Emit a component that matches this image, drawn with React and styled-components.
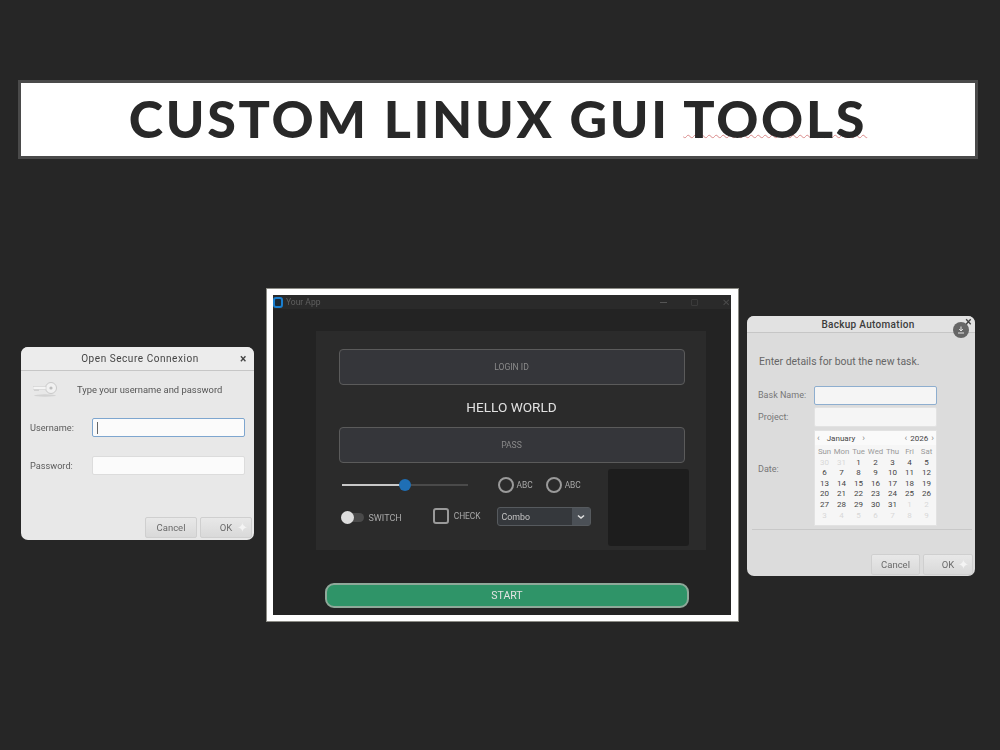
import React from "react";
import styled, { createGlobalStyle } from "styled-components";

const GlobalStyle = createGlobalStyle`
  html, body { margin: 0; padding: 0; background: #262626; }
  * { box-sizing: border-box; }
`;

const Page = styled.div`
  width: 1000px;
  height: 750px;
  overflow: hidden;
  background: #262626;
  padding-top: 80px;
  font-family: Roboto, sans-serif;
`;

const Banner = styled.div`
  width: 960px;
  height: 79px;
  margin-left: 18px;
  background: #fff;
  border: 3px solid #4a4a4a;
  display: flex;
  align-items: center;
  justify-content: center;
  padding: 0 0 4px 0;
  filter: blur(0.4px);
`;

const Title = styled.h1`
  margin: 0;
  font-family: Lato, sans-serif;
  font-weight: 900;
  font-size: 52px;
  line-height: 1;
  letter-spacing: 2.7px;
  color: #282828;
  white-space: nowrap;
`;

const Misspelt = styled.span`
  text-decoration: underline wavy #d98a8a 1px;
  text-underline-offset: -4px;
  text-decoration-skip-ink: none;
`;

const Windows = styled.div`
  display: flex;
  align-items: flex-start;
  margin-top: 129px;
  padding-left: 21px;
`;

const GnomeDialog = styled.div`
  width: ${(p) => p.$width}px;
  height: ${(p) => p.$height}px;
  margin-top: ${(p) => p.$top}px;
  margin-left: ${(p) => p.$left || 0}px;
  background: ${(p) => p.$bg};
  border-radius: 7px;
  display: flex;
  flex-direction: column;
  color: #555;
  filter: blur(0.5px);
`;

const DialogBar = styled.div`
  height: ${(p) => p.$height}px;
  flex: none;
  display: flex;
  align-items: center;
  justify-content: center;
  position: relative;
  padding-left: ${(p) => p.$pad || 0}px;
  border-bottom: 1px solid #c6c6c6;
  background: ${(p) => p.$bg};
  border-radius: 7px 7px 0 0;
  color: ${(p) => p.$color};
  font-size: ${(p) => p.$size}px;
  font-weight: ${(p) => p.$weight};
  letter-spacing: ${(p) => p.$spacing}px;
`;

const CloseMark = styled.span`
  position: absolute;
  right: ${(p) => p.$right}px;
  top: ${(p) => p.$top}px;
  font-size: 12px;
  line-height: 1;
  font-weight: 700;
  color: #444;
`;

const Intro = styled.div`
  display: flex;
  align-items: center;
  height: 20px;
  margin: 8px 0 0 12px;
  gap: 19px;
  font-size: 9.4px;
  color: #555;
`;

const FormRow = styled.div`
  display: flex;
  align-items: center;
  justify-content: space-between;
  margin: ${(p) => p.$top}px 9px 0 9px;
  font-size: 9.2px;
  color: #5c5c5c;
`;

const Field = styled.div`
  width: 153px;
  height: 19px;
  background: #fbfbfb;
  border: 1px solid ${(p) => (p.$focus ? "#7ea6cf" : "#dcdcdc")};
  border-radius: 2px;
  padding: 3px 4px;
`;

const Caret = styled.div`
  width: 1px;
  height: 12px;
  background: #666;
`;

const ButtonRow = styled.div`
  margin-top: auto;
  display: flex;
  justify-content: flex-end;
  gap: ${(p) => p.$gap}px;
  padding: 0 2px ${(p) => p.$bottom}px 0;
`;

const DialogButton = styled.div`
  width: ${(p) => p.$width}px;
  height: 21px;
  background: linear-gradient(#e8e8e8, #d9d9d9);
  border: 1px solid #cfcfcf;
  border-radius: 2px;
  position: relative;
  display: flex;
  align-items: center;
  justify-content: center;
  font-size: 9.5px;
  color: #6a6a6a;
`;

const Sparkle = styled.span`
  position: absolute;
  right: 3px;
  top: 3px;
  font-size: 13px;
  line-height: 1;
  color: #f4f4f4;
`;

/* center window */
const AppFrame = styled.div`
  width: 473px;
  height: 334px;
  margin-left: 12px;
  border: solid #fff;
  border-width: 7px 8px 7px 7px;
  outline: 1px solid #8b8b85;
  outline-offset: -1px;
  background: #232323;
  display: flex;
  flex-direction: column;
  align-items: center;
  font-family: Roboto, sans-serif;
  filter: blur(0.5px);
`;

const AppBar = styled.div`
  width: 100%;
  height: 14px;
  flex: none;
  background: #2a2a2a;
  display: flex;
  align-items: center;
  font-size: 8.5px;
  color: #5f5f5f;
`;

const AppIcon = styled.div`
  width: 10px;
  height: 11px;
  margin-right: 3px;
  background: #1b2a36;
  border: 2.5px solid #1a7fd0;
  border-radius: 3px;
`;

const WindowControls = styled.div`
  margin-left: auto;
  display: flex;
  align-items: center;
  gap: 24px;
  padding-right: 1px;
  font-size: 10px;
  color: #4b4b4b;
`;

const MinimizeMark = styled.div`
  width: 7px;
  height: 1px;
  background: #555;
`;

const MaximizeMark = styled.div`
  width: 7px;
  height: 7px;
  border: 1px solid #3b3b3b;
  border-radius: 1px;
`;

const Panel = styled.div`
  width: 390px;
  height: 219px;
  margin-top: 22px;
  margin-left: 17px;
  flex: none;
  background: #2b2b2b;
  padding: 18px 21px 0 23px;
  display: flex;
  flex-direction: column;
  align-items: center;
`;

const TextBox = styled.div`
  width: 346px;
  height: 36px;
  flex: none;
  background: #35363a;
  border: 1.5px solid #5b5b5b;
  border-radius: 4px;
  display: flex;
  align-items: center;
  justify-content: center;
  font-size: 8.6px;
  color: #8a8a8a;
`;

const Hello = styled.div`
  height: 42px;
  flex: none;
  display: flex;
  align-items: center;
  padding-top: 2px;
  font-size: 13.6px;
  color: #e2e2e2;
`;

const Controls = styled.div`
  width: 100%;
  flex: none;
  display: grid;
  grid-template-columns: 158px 111px 81px;
  margin-top: 6px;
`;

const ControlColumn = styled.div`
  display: flex;
  flex-direction: column;
  padding-top: ${(p) => p.$pad}px;
`;

const TrackRow = styled.div`
  height: 2px;
  width: 126px;
  margin-left: 3px;
  position: relative;
  background: #4a4a4a;
`;

const TrackFill = styled.div`
  height: 100%;
  background: #c8c8c8;
`;

const Thumb = styled.div`
  position: absolute;
  top: -5px;
  width: 12px;
  height: 12px;
  margin-left: -6px;
  border-radius: 50%;
  background: #1f6fb5;
`;

const ToggleLine = styled.div`
  display: flex;
  align-items: center;
  margin-top: 25px;
`;

const Toggle = styled.div`
  width: 23px;
  height: 9px;
  margin-left: 2px;
  background: #4a4a4a;
  border-radius: 5px;
  position: relative;
`;

const ToggleKnob = styled.div`
  position: absolute;
  left: 0;
  top: -2px;
  width: 13px;
  height: 13px;
  border-radius: 50%;
  background: #dedede;
`;

const SmallLabel = styled.span`
  font-size: ${(p) => p.$size}px;
  color: #a8a8a8;
  margin-left: ${(p) => p.$gap}px;
  white-space: nowrap;
`;

const CheckGroup = styled.div`
  display: flex;
  align-items: center;
  margin-left: 31px;
  margin-top: -3px;
`;

const CheckBox = styled.div`
  width: 16px;
  height: 16px;
  border: 2px solid #9a9a9a;
  border-radius: 3px;
`;

const RadioRow = styled.div`
  display: flex;
  align-items: center;
  margin-left: 1px;
`;

const Radio = styled.div`
  width: 16px;
  height: 16px;
  border: 2px solid #9a9a9a;
  border-radius: 50%;
  margin-left: ${(p) => p.$gap || 0}px;
`;

const Combo = styled.div`
  width: 94px;
  height: 19px;
  margin-top: 14px;
  background: #35383c;
  border: 1px solid #565a5e;
  border-radius: 3px;
  display: flex;
  align-items: center;
  justify-content: space-between;
  font-size: 8.8px;
  color: #c4c4c4;
  padding-left: 4px;
`;

const ComboArrow = styled.div`
  width: 18px;
  height: 100%;
  background: #4b5056;
  display: flex;
  align-items: center;
  justify-content: center;
`;

const Preview = styled.div`
  width: 81px;
  height: 77px;
  background: #1d1d1d;
  border-radius: 3px;
`;

const StartButton = styled.div`
  width: 364px;
  height: 25px;
  flex: none;
  margin-top: 33px;
  margin-left: 10px;
  background: #2f9468;
  border: 2px solid #8fa99a;
  border-radius: 9px;
  display: flex;
  align-items: center;
  justify-content: center;
  font-size: 10.5px;
  color: #e4e4e4;
`;

/* backup dialog */
const BackupIntro = styled.div`
  margin: 22px 0 0 12px;
  height: 14px;
  font-size: 10.4px;
  line-height: 14px;
  color: #666;
`;

const BackupRow = styled.div`
  display: flex;
  align-items: flex-start;
  margin: ${(p) => p.$top}px 0 0 11px;
  font-size: 9px;
  color: #777;
`;

const BackupLabel = styled.div`
  width: 56px;
  flex: none;
  line-height: 16px;
  padding-top: ${(p) => p.$pad || 0}px;
`;

const BackupField = styled.div`
  width: 123px;
  height: ${(p) => p.$height}px;
  background: #f5f5f5;
  border: 1px solid ${(p) => (p.$focus ? "#8eaecf" : "#e2e2e2")};
  border-radius: 2px;
`;

const Calendar = styled.div`
  width: 123px;
  height: 96px;
  background: #f6f6f6;
  border: 1px solid #e2e2e2;
  color: #444;
  font-size: 8px;
`;

const CalendarHead = styled.div`
  height: 14px;
  display: flex;
  align-items: center;
  justify-content: space-between;
  padding: 0 2px;
  background: #fafafa;
  font-size: 8px;
  color: #444;
`;

const Stepper = styled.div`
  display: flex;
  align-items: center;
  gap: ${(p) => p.$gap}px;
`;

const Chevron = styled.span`
  color: #888;
  font-size: 9px;
`;

const CalendarGrid = styled.div`
  display: grid;
  grid-template-columns: repeat(7, 17px);
  grid-auto-rows: 10.6px;
  padding: 2px 0 0 1px;
`;

const WeekDay = styled.div`
  text-align: center;
  line-height: 10.6px;
  font-size: 7.8px;
  color: #9a9a9a;
`;

const Day = styled.div`
  text-align: center;
  line-height: 10.6px;
  font-size: 8px;
  color: ${(p) => (p.$muted ? "#d8d8d8" : "#444")};
`;

const Rule = styled.div`
  height: 1px;
  margin: 3px 3px 0 5px;
  background: #c8c8c8;
`;

const DownloadBadge = styled.div`
  position: absolute;
  right: 6px;
  top: 6px;
  width: 16px;
  height: 16px;
  border-radius: 50%;
  background: #666;
  display: flex;
  align-items: center;
  justify-content: center;
`;

const weekDays = ["Sun", "Mon", "Tue", "Wed", "Thu", "Fri", "Sat"];
const days = [
  [30, 1], [31, 1], [1], [2], [3], [4], [5],
  [6], [7], [8], [9], [10], [11], [12],
  [13], [14], [15], [16], [17], [18], [19],
  [20], [21], [22], [23], [24], [25], [26],
  [27], [28], [29], [30], [31], [1, 1], [2, 1],
  [3, 1], [4, 1], [5, 1], [6, 1], [7, 1], [8, 1], [9, 1],
];

const KeyIcon = () => (
  <svg width="25" height="16" viewBox="0 0 25 16" fill="none">
    <ellipse cx="12" cy="14.5" rx="11" ry="1.2" fill="#d2d2d2" />
    <circle cx="18" cy="7" r="5.5" fill="#f1f1f1" stroke="#c9c9c9" strokeWidth="1" />
    <circle cx="18" cy="7" r="1.6" fill="#bdbdbd" />
    <rect x="0" y="5.5" width="13" height="3" fill="#f4f4f4" stroke="#cfcfcf" strokeWidth="0.6" />
    <rect x="1" y="8.5" width="5" height="1.4" fill="#cfcfcf" />
  </svg>
);

const LoginDialog = () => (
  <GnomeDialog $width={233} $height={193} $top={59} $bg="#e8e8e8">
    <DialogBar $height={24} $bg="#ececec" $color="#444" $size={10} $weight={400} $spacing={0.55} $pad={5}>
      Open Secure Connexion
      <CloseMark $right={7} $top={6}>×</CloseMark>
    </DialogBar>
    <Intro>
      <KeyIcon />
      Type your username and password
    </Intro>
    <FormRow $top={19}>
      Username:
      <Field $focus><Caret /></Field>
    </FormRow>
    <FormRow $top={19}>
      Password:
      <Field />
    </FormRow>
    <ButtonRow $gap={3} $bottom={2}>
      <DialogButton $width={52}>Cancel</DialogButton>
      <DialogButton $width={52}>
        OK
        <Sparkle>✦</Sparkle>
      </DialogButton>
    </ButtonRow>
  </GnomeDialog>
);

const AppWindow = () => (
  <AppFrame>
    <AppBar>
      <AppIcon />
      Your App
      <WindowControls>
        <MinimizeMark />
        <MaximizeMark />
        <span>✕</span>
      </WindowControls>
    </AppBar>
    <Panel>
      <TextBox>LOGIN ID</TextBox>
      <Hello>HELLO WORLD</Hello>
      <TextBox>PASS</TextBox>
      <Controls>
        <ControlColumn $pad={15}>
          <TrackRow>
            <TrackFill style={{ width: "50%" }} />
            <Thumb style={{ left: "50%" }} />
          </TrackRow>
          <ToggleLine>
            <Toggle><ToggleKnob /></Toggle>
            <SmallLabel $gap={5} $size={9}>SWITCH</SmallLabel>
            <CheckGroup>
              <CheckBox />
              <SmallLabel $gap={5} $size={8.4}>CHECK</SmallLabel>
            </CheckGroup>
          </ToggleLine>
        </ControlColumn>
        <ControlColumn $pad={8}>
          <RadioRow>
            <Radio />
            <SmallLabel $gap={3} $size={8.4}>ABC</SmallLabel>
            <Radio $gap={13} />
            <SmallLabel $gap={3} $size={8.4}>ABC</SmallLabel>
          </RadioRow>
          <Combo>
            Combo
            <ComboArrow>
              <svg width="8" height="6" viewBox="0 0 8 6" fill="none">
                <path d="M1 1.5 L4 4 L7 1.5" stroke="#e0e0e0" strokeWidth="1.6" />
              </svg>
            </ComboArrow>
          </Combo>
        </ControlColumn>
        <Preview />
      </Controls>
    </Panel>
    <StartButton>START</StartButton>
  </AppFrame>
);

const BackupDialog = () => (
  <GnomeDialog $width={228} $height={260} $top={28} $left={8} $bg="#dcdcdc">
    <DialogBar $height={17} $bg="#e2e2e2" $color="#3c3c3c" $size={10} $weight={500} $spacing={0.3} $pad={14}>
      Backup Automation
      <DownloadBadge>
        <svg width="8" height="8" viewBox="0 0 8 8" fill="none">
          <path d="M4 0.5 V4.5 M2.2 3 L4 5 L5.8 3 M1 7 H7" stroke="#e6e6e6" strokeWidth="1" />
        </svg>
      </DownloadBadge>
      <CloseMark $right={3} $top={0}>×</CloseMark>
    </DialogBar>
    <BackupIntro>Enter details for bout the new task.</BackupIntro>
    <BackupRow $top={17}>
      <BackupLabel $pad={1}>Bask Name:</BackupLabel>
      <BackupField $focus $height={19} />
    </BackupRow>
    <BackupRow $top={2}>
      <BackupLabel $pad={2}>Project:</BackupLabel>
      <BackupField $height={20} />
    </BackupRow>
    <BackupRow $top={3}>
      <BackupLabel $pad={31}>Date:</BackupLabel>
      <Calendar>
        <CalendarHead>
          <Stepper $gap={7}>
            <Chevron>‹</Chevron>
            January
            <Chevron>›</Chevron>
          </Stepper>
          <Stepper $gap={3}>
            <Chevron>‹</Chevron>
            2026
            <Chevron>›</Chevron>
          </Stepper>
        </CalendarHead>
        <CalendarGrid>
          {weekDays.map((d) => (
            <WeekDay key={d}>{d}</WeekDay>
          ))}
          {days.map(([n, muted], i) => (
            <Day key={i} $muted={muted}>{n}</Day>
          ))}
        </CalendarGrid>
      </Calendar>
    </BackupRow>
    <Rule />
    <ButtonRow $gap={3} $bottom={1}>
      <DialogButton $width={49}>Cancel</DialogButton>
      <DialogButton $width={50}>
        OK
        <Sparkle>✦</Sparkle>
      </DialogButton>
    </ButtonRow>
  </GnomeDialog>
);

export default function App() {
  return (
    <Page>
      <GlobalStyle />
      <Banner>
        <Title>
          CUSTOM LINUX GUI <Misspelt>TOOLS</Misspelt>
        </Title>
      </Banner>
      <Windows>
        <LoginDialog />
        <AppWindow />
        <BackupDialog />
      </Windows>
    </Page>
  );
}
